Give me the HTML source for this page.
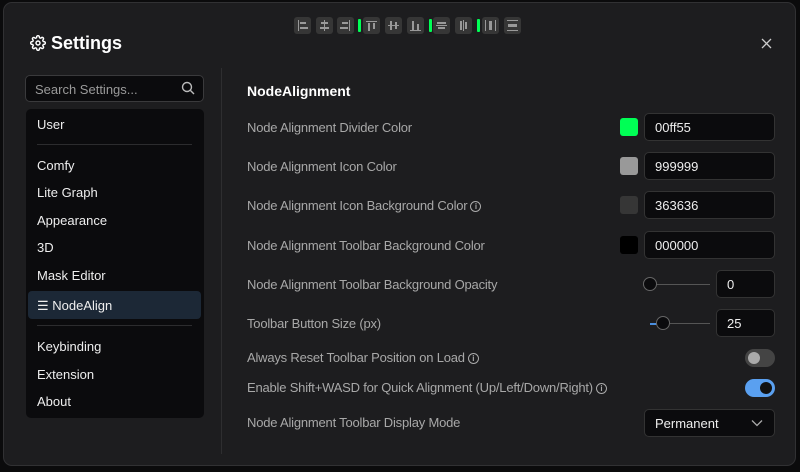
<!DOCTYPE html><html><head><style>
*{box-sizing:border-box;margin:0;padding:0}
body{width:800px;height:472px;background:#0b0b0c;font-family:"Liberation Sans",sans-serif;position:relative;overflow:hidden;color:#ddd}
.dlg{position:absolute;left:3px;top:2px;width:793px;height:464px;background:#1d1d1f;border:1px solid #313133;border-radius:9px}
.a{position:absolute}
.tb{position:absolute;top:17px;width:17px;height:17px;background:#363636;border-radius:3px}
.tb i{position:absolute;background:#999;}
.dv{position:absolute;top:19px;width:3px;height:13px;background:#00ff55;border-radius:1px}
.side{position:absolute;left:26px;top:109px;width:178px;height:309px;background:#0b0b0d;border-radius:5px}
.si{position:absolute;left:11px;font-size:13px;color:#eee}
.lbl{position:absolute;left:247px;font-size:13px;color:#a8a8a8;letter-spacing:-0.2px}
.inp{position:absolute;left:644px;width:131px;height:28px;background:#0b0b0d;border:1px solid #333;border-radius:5px;font-size:13px;color:#eee;padding:6px 0 0 10px}
.sw{position:absolute;left:620px;width:18px;height:18px;border-radius:3px}
.info{display:inline-block;width:11px;height:11px;border:1px solid #aaa;border-radius:50%;font-size:8px;line-height:9px;text-align:center;vertical-align:1px;margin-left:3px;color:#aaa;font-weight:bold;letter-spacing:0}
</style></head><body>
<div class="dlg"></div>
<div class="tb" style="left:294px"><i style="left:4px;top:3px;width:1px;height:11px"></i><i style="left:6px;top:5px;width:6px;height:2px"></i><i style="left:6px;top:10px;width:8px;height:2px"></i></div>
<div class="tb" style="left:316px"><i style="left:8px;top:3px;width:1px;height:11px"></i><i style="left:5px;top:5px;width:7px;height:2px"></i><i style="left:4px;top:10px;width:9px;height:2px"></i></div>
<div class="tb" style="left:337px"><i style="left:12px;top:3px;width:1px;height:11px"></i><i style="left:5px;top:5px;width:6px;height:2px"></i><i style="left:3px;top:10px;width:8px;height:2px"></i></div>
<div class="dv" style="left:358px"></div>
<div class="tb" style="left:363px"><i style="left:3px;top:4px;width:11px;height:1px"></i><i style="left:5px;top:6px;width:2px;height:8px"></i><i style="left:10px;top:6px;width:2px;height:6px"></i></div>
<div class="tb" style="left:385px"><i style="left:3px;top:8px;width:11px;height:1px"></i><i style="left:5px;top:4px;width:2px;height:9px"></i><i style="left:10px;top:5px;width:2px;height:7px"></i></div>
<div class="tb" style="left:407px"><i style="left:3px;top:13px;width:11px;height:1px"></i><i style="left:5px;top:4px;width:2px;height:9px"></i><i style="left:10px;top:7px;width:2px;height:6px"></i></div>
<div class="dv" style="left:429px"></div>
<div class="tb" style="left:433px"><i style="left:4px;top:5px;width:9px;height:2px"></i><i style="left:3px;top:8px;width:11px;height:1px"></i><i style="left:5px;top:10px;width:7px;height:2px"></i></div>
<div class="tb" style="left:455px"><i style="left:5px;top:4px;width:2px;height:9px"></i><i style="left:8px;top:3px;width:1px;height:11px"></i><i style="left:10px;top:5px;width:2px;height:7px"></i></div>
<div class="dv" style="left:477px"></div>
<div class="tb" style="left:482px"><i style="left:3px;top:3px;width:1px;height:11px"></i><i style="left:13px;top:3px;width:1px;height:11px"></i><i style="left:7px;top:4px;width:3px;height:9px"></i></div>
<div class="tb" style="left:504px"><i style="left:3px;top:3px;width:11px;height:1px"></i><i style="left:3px;top:13px;width:11px;height:1px"></i><i style="left:4px;top:7px;width:9px;height:3px"></i></div>
<svg class="a" style="left:30px;top:35px" width="16" height="16" viewBox="0 0 24 24" fill="none" stroke="#fff" stroke-width="2.2"><circle cx="12" cy="12" r="3"/><path d="M19.4 15a1.650 1.650 0 0 0 .33 1.820l.06.06a2 2 0 1 1-2.830 2.830l-.06-.06a1.650 1.650 0 0 0-1.820-.33 1.650 1.650 0 0 0-1 1.510V21a2 2 0 1 1-4 0v-.09A1.650 1.650 0 0 0 9 19.4a1.650 1.650 0 0 0-1.820.33l-.06.06a2 2 0 1 1-2.830-2.830l.06-.06A1.650 1.650 0 0 0 4.680 15a1.650 1.650 0 0 0-1.510-1H3a2 2 0 1 1 0-4h.09A1.650 1.650 0 0 0 4.600 9a1.650 1.650 0 0 0-.33-1.820l-.06-.06a2 2 0 1 1 2.830-2.830l.06.06A1.650 1.650 0 0 0 9 4.680a1.650 1.650 0 0 0 1-1.510V3a2 2 0 1 1 4 0v.09a1.650 1.650 0 0 0 1 1.510 1.650 1.650 0 0 0 1.820-.33l.06-.06a2 2 0 1 1 2.830 2.830l-.06.06A1.650 1.650 0 0 0 19.4 9a1.650 1.650 0 0 0 1.510 1H21a2 2 0 1 1 0 4h-.09a1.650 1.650 0 0 0-1.510 1z"/></svg>
<div class="a" style="left:51px;top:33px;font-size:18px;font-weight:bold;color:#fff">Settings</div>
<svg class="a" style="left:761px;top:38px" width="11" height="11" viewBox="0 0 11 11" stroke="#ccc" stroke-width="1.3"><path d="M1 1L10 10M10 1L1 10"/></svg>
<div class="a" style="left:25px;top:75px;width:179px;height:27px;background:#0b0b0d;border:1px solid #3a3a3c;border-radius:5px;font-size:13px;color:#9a9a9a;padding:6px 0 0 9px">Search Settings...</div>
<svg class="a" style="left:181px;top:81px" width="14" height="14" viewBox="0 0 14 14" fill="none" stroke="#bbb" stroke-width="1.4"><circle cx="6" cy="6" r="4.5"/><path d="M9.5 9.5L13 13"/></svg>
<div class="a" style="left:221px;top:68px;width:1px;height:386px;background:#2e2e30"></div>
<div class="side">
<div class="si" style="top:8px">User</div>
<div class="a" style="left:11px;top:35px;width:155px;height:1px;background:#2c2c2e"></div>
<div class="si" style="top:49px">Comfy</div>
<div class="si" style="top:76px">Lite Graph</div>
<div class="si" style="top:104px">Appearance</div>
<div class="si" style="top:131px">3D</div>
<div class="si" style="top:159px">Mask Editor</div>
<div class="a" style="left:2px;top:182px;width:173px;height:28px;background:#1c2836;border-radius:4px"></div>
<div class="si" style="top:189px">☰ NodeAlign</div>
<div class="a" style="left:11px;top:216px;width:155px;height:1px;background:#2c2c2e"></div>
<div class="si" style="top:230px">Keybinding</div>
<div class="si" style="top:258px">Extension</div>
<div class="si" style="top:285px">About</div>
</div>
<div class="a" style="left:247px;top:83px;font-size:14px;font-weight:bold;color:#fff">NodeAlignment</div>
<div class="lbl" style="top:120px">Node Alignment Divider Color</div>
<div class="sw" style="top:118px;background:#00ff55"></div><div class="inp" style="top:113px">00ff55</div>
<div class="lbl" style="top:159px">Node Alignment Icon Color</div>
<div class="sw" style="top:157px;background:#999"></div><div class="inp" style="top:152px">999999</div>
<div class="lbl" style="top:198px">Node Alignment Icon Background Color<span class="info">i</span></div>
<div class="sw" style="top:196px;background:#363636"></div><div class="inp" style="top:191px">363636</div>
<div class="lbl" style="top:238px">Node Alignment Toolbar Background Color</div>
<div class="sw" style="top:236px;background:#000"></div><div class="inp" style="top:231px">000000</div>
<div class="lbl" style="top:277px">Node Alignment Toolbar Background Opacity</div>
<div class="a" style="left:650px;top:284px;width:60px;height:1px;background:#555"></div>
<div class="a" style="left:643px;top:277px;width:14px;height:14px;border-radius:50%;background:#0b0b0d;border:1.5px solid #666"></div>
<div class="inp" style="left:716px;width:59px;top:270px">0</div>
<div class="lbl" style="top:316px">Toolbar Button Size (px)</div>
<div class="a" style="left:650px;top:323px;width:60px;height:1px;background:#555"></div>
<div class="a" style="left:650px;top:323px;width:10px;height:2px;background:#4a8fe0"></div>
<div class="a" style="left:656px;top:316px;width:14px;height:14px;border-radius:50%;background:#0b0b0d;border:1.5px solid #666"></div>
<div class="inp" style="left:716px;width:59px;top:309px">25</div>
<div class="lbl" style="top:350px">Always Reset Toolbar Position on Load<span class="info">i</span></div>
<div class="a" style="left:745px;top:349px;width:30px;height:18px;border-radius:9px;background:#444"></div>
<div class="a" style="left:748px;top:352px;width:12px;height:12px;border-radius:50%;background:#aaa"></div>
<div class="lbl" style="top:380px">Enable Shift+WASD for Quick Alignment (Up/Left/Down/Right)<span class="info">i</span></div>
<div class="a" style="left:745px;top:379px;width:30px;height:18px;border-radius:9px;background:#5aa0f0"></div>
<div class="a" style="left:760px;top:382px;width:12px;height:12px;border-radius:50%;background:#111"></div>
<div class="lbl" style="top:415px">Node Alignment Toolbar Display Mode</div>
<div class="inp" style="top:409px">Permanent</div>
<svg class="a" style="left:751px;top:419px" width="12" height="8" viewBox="0 0 12 8" fill="none" stroke="#aaa" stroke-width="1.3"><path d="M1 1.5L6 6.5L11 1.5"/></svg>
</body></html>
